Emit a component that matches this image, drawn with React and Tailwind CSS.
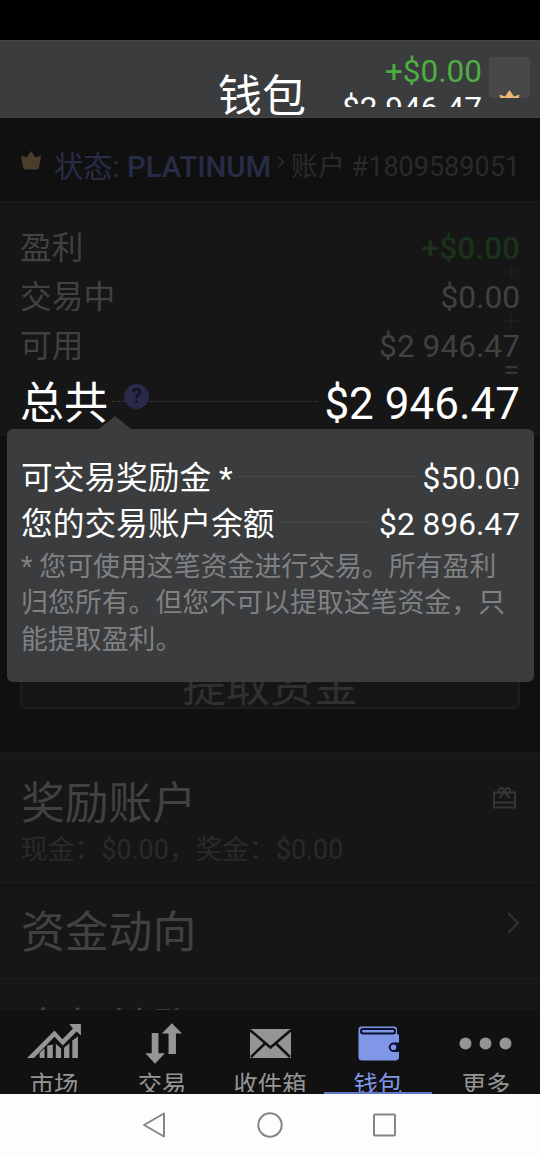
import React from 'react';

const summaryRows = [
  { label: '盈利', value: '+$0.00', valueClass: 'text-[#1c311b] font-medium', sign: '+' },
  { label: '交易中', value: '$0.00', valueClass: 'text-[#414141]', sign: '+' },
  { label: '可用', value: '$2 946.47', valueClass: 'text-[#414141]', sign: '=' },
];

const Crown = ({ className }) => (
  <svg viewBox="0 0 20 19" className={className} fill="currentColor">
    <path d="M0 4.500L5.500 6.500L10 0L14.500 6.500L20 4.500L18 16.500Q17.800 18.500 15.800 18.500H4.200Q2.200 18.500 2 16.500Z" />
  </svg>
);

const Chevron = ({ className }) => (
  <svg viewBox="0 0 12 22" className={className} fill="none" stroke="currentColor" strokeWidth="2">
    <path d="M1 1L11 11L1 21" />
  </svg>
);

const ChartIcon = () => (
  <svg viewBox="80 68 163 103" className="w-[54px] h-[34px] -mt-[6px]" fill="currentColor">
    <path d="M80 171L163 88L187 114L219 82L208 68H243V103L230 91L188 133L163 107L101 171Z" />
    <path d="M118 171V156L133 142V171ZM141 171V134L158 130V171ZM167 171V128L183 142V171ZM192 171V140L208 126V171ZM217 171V118L234 106V171Z" />
  </svg>
);

const TradeIcon = () => (
  <svg viewBox="436 68 110 122" className="w-[37px] h-[41px] ml-[4px]" fill="currentColor">
    <path d="M456 98H476V158H495L466 189L437 158H456Z" />
    <path d="M516 69L546 99H528V160H506V99H486Z" />
  </svg>
);

const MailIcon = () => (
  <svg viewBox="0 0 41 29" className="w-[41px] h-[29px] ml-[1px]">
    <rect width="41" height="29" fill="currentColor" />
    <path d="M0 1L20.500 18.500L41 1M1 28L15 14.500M40 28L26 14.500" fill="none" stroke="#111" strokeWidth="2.500" />
  </svg>
);

const WalletIcon = () => (
  <svg viewBox="0 0 41 35" className="w-[41px] h-[35px] ml-[1px]">
    <path d="M3.500 0.500H36Q39 0.500 39 3.500V8.500Q41 8.500 41 11V31Q41 34.500 37 34.500H4Q0.500 34.500 0.500 31V3.500Q0.500 0.500 3.500 0.500Z" fill="currentColor" />
    <rect x="3" y="3" width="34" height="4.500" rx="2.200" fill="currentColor" stroke="#0b1030" strokeWidth="2" />
    <path d="M41 16.500H35.500A4.700 4.700 0 0 0 35.500 26H41Z" fill="#0b1030" />
    <path d="M39 8.500H41.500V16H39Z" fill="currentColor" />
    <circle cx="35.500" cy="21.200" r="2.800" fill="currentColor" />
  </svg>
);

const MoreIcon = () => (
  <svg viewBox="0 0 53 13" className="w-[53px] h-[13px]" fill="currentColor">
    <circle cx="6.500" cy="6.500" r="6" />
    <circle cx="26.500" cy="6.500" r="6" />
    <circle cx="46.500" cy="6.500" r="6" />
  </svg>
);

const tabs = [
  { label: '市场', icon: ChartIcon },
  { label: '交易', icon: TradeIcon },
  { label: '收件箱', icon: MailIcon },
  { label: '钱包', icon: WalletIcon, active: true },
  { label: '更多', icon: MoreIcon },
];

const Header = () => (
  <header className="relative flex h-[78px] bg-[#3a3c3e] border-y border-[#464646] text-white overflow-hidden">
    <h1 className="ml-[218px] mt-[34px] w-[88px] text-[44px] leading-[44px]">钱包</h1>
    <div className="flex-1 mt-[12px] h-[54px] overflow-hidden text-right text-[31.500px] leading-[37px] pr-[7px]">
      <div className="text-[#4eae3f]">+$0.00</div>
      <div>$2 946.47</div>
    </div>
    <div className="mt-[16px] mr-[10px] w-[41px] h-[41px] rounded bg-[#484849] overflow-hidden flex justify-center items-end">
      <div className="h-[8px] overflow-hidden">
        <Crown className="w-[21px] h-[19px] text-[#edb877]" />
      </div>
    </div>
  </header>
);

const StatusRow = () => (
  <div className="flex items-center h-[84px] bg-[#101010] pl-[21px] pr-[20px] pt-[14px] border-b border-[#1c1c1c] whitespace-nowrap">
    <Crown className="w-[20px] h-[19px] text-[#4b3d2c] -mt-[12px]" />
    <div className="ml-[13px] text-[29.300px] leading-[36px] text-[#272c47]">
      状态: <span className="font-medium">PLATINUM</span>
    </div>
    <Chevron className="w-[7px] h-[12px] ml-[6px] -mt-[10px] text-[#333]" />
    <div className="ml-auto text-[27px] leading-[36px] text-[#2a2a2a]">账户 #1809589051</div>
  </div>
);

const Summary = () => (
  <div className="h-[234px] bg-[#161616] pt-[22px] pl-[20px] pr-[20px] text-[31.700px] text-[#414141]">
    {summaryRows.map((row) => (
      <div key={row.label} className="relative flex items-center h-[49px] leading-[48px]">
        <span>{row.label}</span>
        <span className="flex-1 mx-[10px] -mt-[8px] border-t border-dashed border-[#121212]" />
        <span className={row.valueClass}>{row.value}</span>
        <span className={`absolute right-px -bottom-[11px] h-[24px] text-[28px] leading-[24px] ${row.sign === '=' ? 'text-[#363636]' : 'text-[#1d1d1d]'}`}>
          {row.sign}
        </span>
      </div>
    ))}
    <div className="flex items-center h-[66px] leading-[66px] text-[44px] text-white">
      <span>总共</span>
      <span className="relative flex-1 ml-[4px] mr-[6px] -mt-[6px] border-t border-dotted border-[#414141]">
        <span className="absolute left-[12px] -top-[18px] w-[25px] h-[25px] rounded-full bg-[#282b47] text-[#111322] text-[21px] leading-[25px] font-medium text-center">?</span>
      </span>
      <span>$2 946.47</span>
    </div>
  </div>
);

const BalanceTooltip = () => (
  <div className="absolute left-[7px] top-[429px] w-[527px] h-[253px] rounded-md bg-[#3a3c3e] pt-[27px] pl-[14px] pr-[14px] text-white text-[31.700px]">
    <div className="absolute left-[92px] -top-[13px] border-x-[16px] border-x-transparent border-b-[13px] border-b-[#3a3c3e]" />
    <div className="relative flex items-center h-[46px] leading-[46px]">
      <span>可交易奖励金 *</span>
      <span className="flex-1 ml-[6px] mr-[7px] -mt-[5px] border-t border-dotted border-[#505254]" />
      <span>$50.00</span>
      <span className="absolute right-0 bottom-[14px] w-[15px] h-[2px] bg-[#3a3c3e]" />
    </div>
    <div className="flex items-center h-[46px] leading-[46px]">
      <span>您的交易账户余额</span>
      <span className="flex-1 ml-[6px] mr-[7px] -mt-[5px] border-t border-dotted border-[#505254]" />
      <span>$2 896.47</span>
    </div>
    <p className="mt-[1px] text-[26.900px] leading-[36.300px] text-[#7f8183] whitespace-nowrap">
      * 您可使用这笔资金进行交易。所有盈利<br />
      归您所有。但您不可以提取这笔资金，只<br />
      能提取盈利。
    </p>
  </div>
);

const MenuList = () => (
  <div className="flex-1 overflow-hidden bg-[#161616] text-[#414141] text-[43.800px] border-t border-[#1b1b1b]">
    <div className="flex justify-between h-[134px] pl-[21px] pr-[24px] pt-[23px] border-b-2 border-[#111]">
      <div>
        <div className="h-[54px] leading-[56px]">奖励账户</div>
        <div className="h-[40px] leading-[40px] text-[26.800px] text-[#2a2a2a]">现金：$0.00，奖金：$0.00</div>
      </div>
      <svg viewBox="0 0 23 22" className="w-[23px] h-[22px] mt-[11px] text-[#353535]" fill="none" stroke="currentColor" strokeWidth="2">
        <path d="M1 5.500H22V20.500H1ZM1 15.500H22M6 11L11.500 5.500L17 11" />
        <circle cx="8.500" cy="3.500" r="2.500" />
        <circle cx="14.500" cy="3.500" r="2.500" />
      </svg>
    </div>
    <div className="flex justify-between h-[92px] pl-[21px] pr-[21px] border-b border-[#1c1c1c]">
      <span className="leading-[93px]">资金动向</span>
      <Chevron className="w-[12px] h-[22px] mt-[25px] text-[#333]" />
    </div>
    <div className="flex justify-between h-[92px] pl-[21px] pr-[21px]">
      <span className="leading-[102px]">全部转账</span>
      <Chevron className="w-[12px] h-[22px] mt-[30px] text-[#333]" />
    </div>
  </div>
);

const TabBar = () => (
  <nav className="flex h-[84px] bg-[#111]">
    {tabs.map(({ label, icon: Icon, active }) => (
      <div
        key={label}
        className={`w-[108px] flex flex-col items-center border-b-2 ${active ? 'text-[#7f97e6] border-[#6078c4]' : 'text-[#959595] border-[#111]'}`}
      >
        <div className="h-[60px] pt-[7px] pr-[1px] flex items-center">
          <Icon />
        </div>
        <div className="h-[22px] overflow-hidden text-[24.300px] leading-[29px]">{label}</div>
      </div>
    ))}
  </nav>
);

const SystemBar = () => (
  <div className="flex justify-center items-center gap-[90px] h-[62px] bg-[#fdfdfd]">
    <svg viewBox="0 0 24 26" className="w-[24px] h-[26px]" fill="none" stroke="#858585" strokeWidth="2" strokeLinejoin="round">
      <path d="M1 13L21 1.500V24.500Z" />
    </svg>
    <svg viewBox="0 0 26 26" className="w-[26px] h-[26px]" fill="none" stroke="#858585" strokeWidth="2">
      <circle cx="13" cy="13" r="11.700" />
    </svg>
    <svg viewBox="0 0 24 24" className="w-[24px] h-[24px]" fill="none" stroke="#858585" strokeWidth="2">
      <rect x="1" y="1.500" width="21" height="21" rx="1" />
    </svg>
  </div>
);

const App = () => {
  return (
    <div
      lang="zh-CN"
      className="relative flex flex-col w-[540px] h-[1156px] overflow-hidden bg-black font-['Roboto','Noto_Sans_CJK_SC',sans-serif]"
    >
      <div className="h-[40px]" />
      <Header />
      <StatusRow />
      <Summary />
      <div className="flex flex-col justify-end h-[316px] bg-[#101010] px-[20px] pb-[43px]">
        <button className="h-[66px] rounded-md border-2 border-[#1e1e1e] bg-[#161616] text-[44px] leading-[44px] pt-[20px] text-[#303030]">
          提取资金
        </button>
      </div>
      <MenuList />
      <TabBar />
      <SystemBar />
      <BalanceTooltip />
    </div>
  );
};

export default App;
